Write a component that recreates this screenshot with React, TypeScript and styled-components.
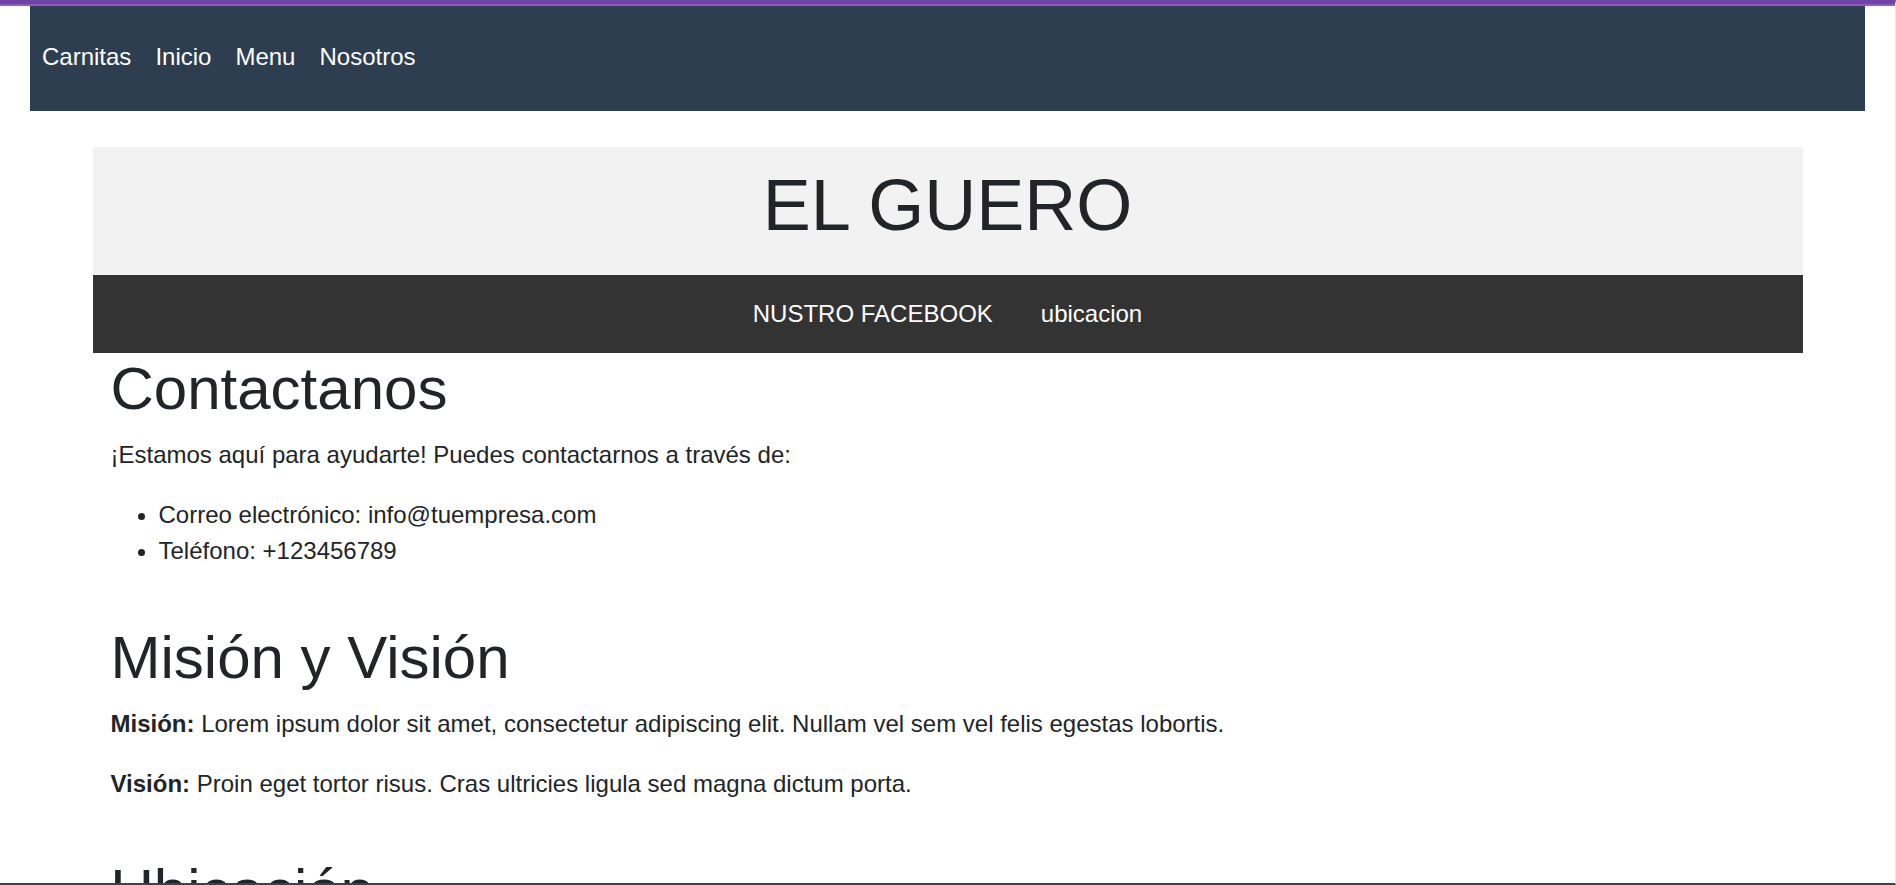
import React from "react";
import styled, { createGlobalStyle } from "styled-components";

const GlobalStyle = createGlobalStyle`
  html, body {
    margin: 0;
    padding: 0;
    background: #ffffff;
  }
  body {
    font-family: "Liberation Sans", Arial, sans-serif;
    font-size: 24px;
    line-height: 1.5;
    color: #212529;
  }
  *, *::before, *::after {
    box-sizing: border-box;
  }
`;

const Frame = styled.div`
  height: 885px;
  overflow: hidden;
  display: flex;
  flex-direction: column;
  border-top: 4px solid #6f42a5;
  border-right: 1px solid #e6e6e6;
  border-bottom: 2px solid #3b4150;
  background: #ffffff;
`;

const Stripe = styled.div`
  flex: 0 0 2px;
  background: #8d5fb7;
`;

const TopNav = styled.nav`
  flex: 0 0 105px;
  margin: 0 30px;
  padding-bottom: 3px;
  background: #2c3e50;
  display: flex;
  align-items: center;
`;

const TopLink = styled.a`
  color: #ffffff;
  text-decoration: none;
  font-size: 24px;
  line-height: 36px;
  padding: 0 12px;
  cursor: pointer;
`;

const Container = styled.div`
  width: 1710px;
  margin: 36px auto 0;
  flex: 0 0 auto;
`;

const Header = styled.header`
  background: #f2f2f2;
  padding: 15px 0 27px;
  text-align: center;
`;

const Title = styled.h1`
  margin: 0;
  font-size: 72px;
  font-weight: 400;
  line-height: 1.2;
  color: #212529;
`;

const SubNav = styled.nav`
  height: 78px;
  background: #333333;
  display: flex;
  justify-content: center;
  align-items: center;
`;

const SubLink = styled.a`
  color: #ffffff;
  text-decoration: none;
  font-size: 24px;
  line-height: 36px;
  padding: 0 24px;
  cursor: pointer;
`;

const Content = styled.main`
  padding: 0 18px;
`;

const Section = styled.section`
  & + & {
    padding-top: 29px;
  }
`;

const Heading = styled.h2`
  margin: 0 0 12px;
  font-size: 60px;
  font-weight: 400;
  line-height: 1.2;
  color: #212529;
`;

const Paragraph = styled.p`
  margin: 0 0 24px;
`;

const List = styled.ul`
  margin: 0 0 24px;
  padding-left: 48px;
`;

const Strong = styled.strong`
  font-weight: 700;
`;

export default function App() {
  return (
    <>
      <GlobalStyle />
      <Frame>
        <Stripe />
        <TopNav>
          <TopLink>Carnitas</TopLink>
          <TopLink>Inicio</TopLink>
          <TopLink>Menu</TopLink>
          <TopLink>Nosotros</TopLink>
        </TopNav>
        <Container>
          <Header>
            <Title>EL GUERO</Title>
          </Header>
          <SubNav>
            <SubLink>NUSTRO FACEBOOK</SubLink>
            <SubLink>ubicacion</SubLink>
          </SubNav>
          <Content>
            <Section>
              <Heading>Contactanos</Heading>
              <Paragraph>¡Estamos aquí para ayudarte! Puedes contactarnos a través de:</Paragraph>
              <List>
                <li>Correo electrónico: info@tuempresa.com</li>
                <li>Teléfono: +123456789</li>
              </List>
            </Section>
            <Section>
              <Heading>Misión y Visión</Heading>
              <Paragraph>
                <Strong>Misión:</Strong> Lorem ipsum dolor sit amet, consectetur adipiscing elit. Nullam vel sem vel felis egestas lobortis.
              </Paragraph>
              <Paragraph>
                <Strong>Visión:</Strong> Proin eget tortor risus. Cras ultricies ligula sed magna dictum porta.
              </Paragraph>
            </Section>
            <Section>
              <Heading>Ubicación</Heading>
              <Paragraph>Encuéntranos en nuestra ubicación.</Paragraph>
            </Section>
          </Content>
        </Container>
      </Frame>
    </>
  );
}
